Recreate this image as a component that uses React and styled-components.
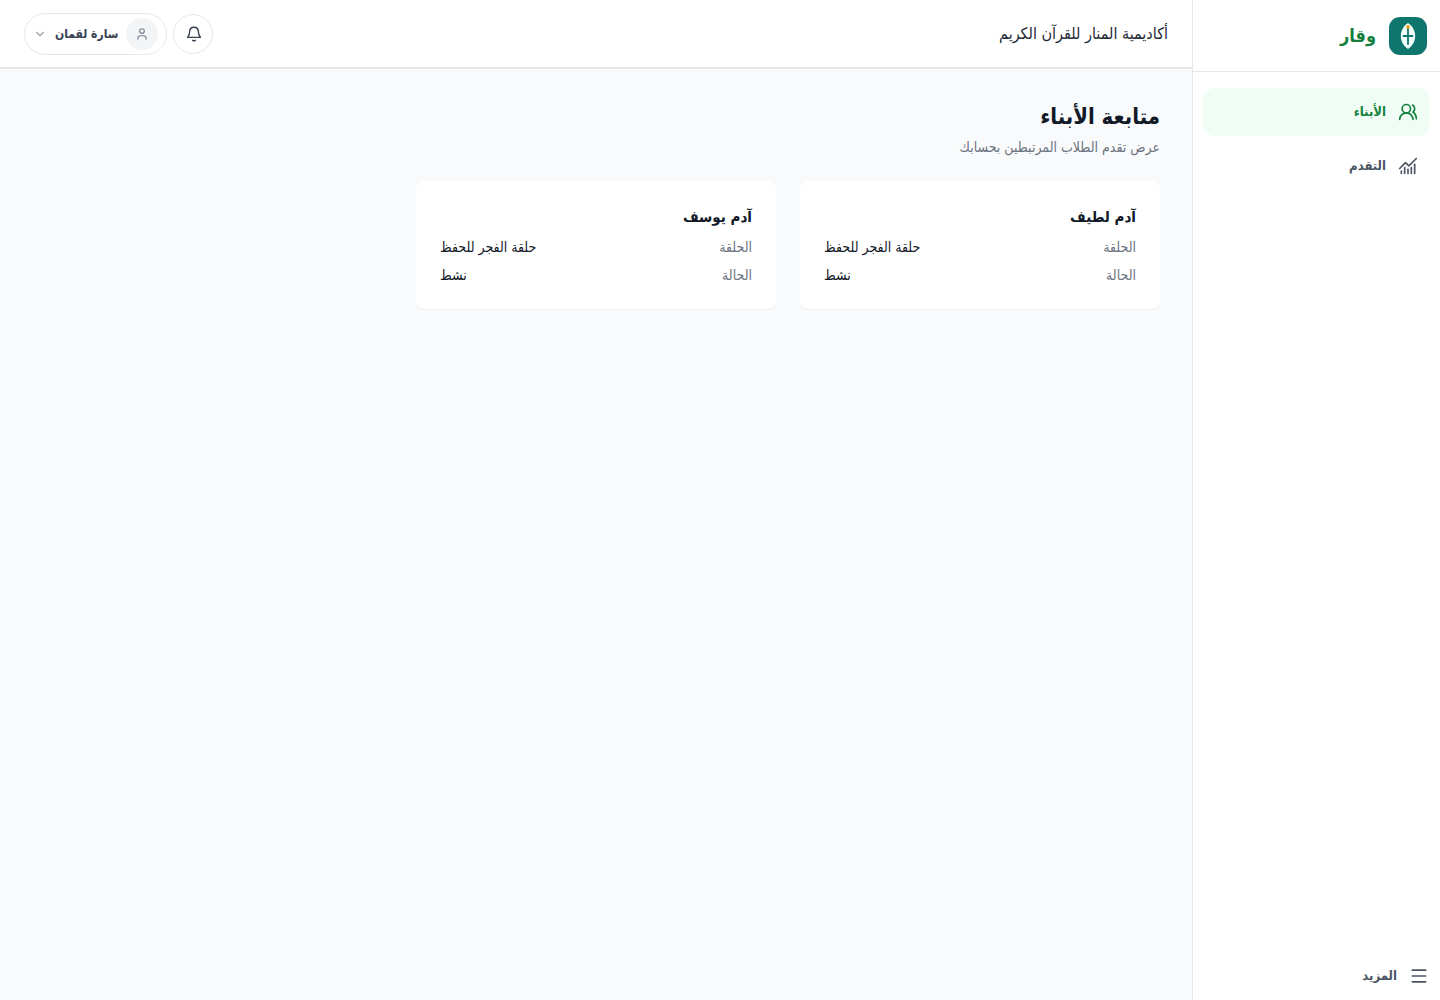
import React from 'react'
import styled, { createGlobalStyle } from 'styled-components'
import {
  ChartNoAxesCombined,
  ChevronDown,
  Menu,
  User,
  UsersRound,
} from 'lucide-react'

const students = [
  { name: 'آدم لطيف', circle: 'حلقة الفجر للحفظ', status: 'نشط' },
  { name: 'آدم يوسف', circle: 'حلقة الفجر للحفظ', status: 'نشط' },
]

const App = () => (
  <>
    <GlobalStyle />
    <Layout dir="rtl" lang="ar">
      <Sidebar>
        <Brand>
          <Logo />
          <BrandName>وقار</BrandName>
        </Brand>
        <Nav>
          <NavLink href="#children" $active>
            <UsersRound size={20} />
            الأبناء
          </NavLink>
          <NavLink href="#progress">
            <ChartNoAxesCombined size={20} />
            التقدم
          </NavLink>
        </Nav>
        <MoreButton type="button">
          <Menu size={20} />
          المزيد
        </MoreButton>
      </Sidebar>
      <Page>
        <Topbar>
          <Academy>أكاديمية المنار للقرآن الكريم</Academy>
          <Actions>
            <BellButton type="button" aria-label="الإشعارات">
              <BellIcon />
            </BellButton>
            <ProfileButton type="button">
              <Avatar>
                <User size={14} />
              </Avatar>
              سارة لقمان
              <ChevronDown size={14} color="#9ca3af" />
            </ProfileButton>
          </Actions>
        </Topbar>
        <Content>
          <Title>متابعة الأبناء</Title>
          <Subtitle>عرض تقدم الطلاب المرتبطين بحسابك</Subtitle>
          <Cards>
            {students.map(student => (
              <StudentCard key={student.name} {...student} />
            ))}
          </Cards>
        </Content>
      </Page>
    </Layout>
  </>
)

export default App

const StudentCard = ({ name, circle, status }) => (
  <Card>
    <CardTitle>{name}</CardTitle>
    <Details>
      <Row>
        <dt>الحلقة</dt>
        <dd>{circle}</dd>
      </Row>
      <Row>
        <dt>الحالة</dt>
        <dd>{status}</dd>
      </Row>
    </Details>
  </Card>
)

const Logo = () => (
  <svg width="40" height="40" viewBox="0 0 40 40" aria-hidden="true">
    <rect x="1" y="1" width="38" height="38" rx="11" fill="#0f766e" />
    <path
      d="M20 7c4.5 3 7.2 8 7.2 13s-2.7 10-7.2 13c-4.5-3-7.2-8-7.2-13s2.700-10 7.2-13z"
      fill="#f0fdfa"
    />
    <path
      d="M20 11v17M15.500 20h9"
      stroke="#0f766e"
      strokeWidth="1.8"
      strokeLinecap="round"
    />
    <circle cx="20" cy="10.800" r="1.800" fill="#f59e0b" />
  </svg>
)

const BellIcon = () => (
  <svg
    width="16"
    height="16"
    viewBox="0 0 16 16"
    fill="none"
    stroke="currentColor"
    strokeWidth="1.4"
    strokeLinecap="round"
    strokeLinejoin="round"
    aria-hidden="true"
  >
    <path d="M8 1.200c-2.700 0-4.300 1.900-4.300 4.300 0 2.900-.8 4.100-2.100 5.900h12.800c-1.300-1.800-2.100-3-2.100-5.900 0-2.400-1.600-4.300-4.300-4.300z" />
    <path d="M6.700 14.300q1.300.9 2.600 0" />
  </svg>
)

const GlobalStyle = createGlobalStyle`
  * {
    box-sizing: border-box;
  }

  body {
    margin: 0;
    background: #f9fafb;
    color: #111827;
    font-family: 'DejaVu Sans Condensed', 'DejaVu Sans', sans-serif;
    font-size: 14px;
    line-height: 20px;
  }

  button {
    font: inherit;
    cursor: pointer;
  }
`

const Layout = styled.div`
  display: flex;
  min-height: 100vh;
`

const Sidebar = styled.aside`
  display: flex;
  flex-direction: column;
  flex: none;
  width: 248px;
  background: #fff;
  border-inline-end: 1px solid #e5e7eb;
`

const Brand = styled.div`
  display: flex;
  align-items: center;
  gap: 12px;
  height: 72px;
  padding: 0 12px;
  border-bottom: 1px solid #e5e7eb;
`

const BrandName = styled.span`
  color: #15803d;
  font-size: 18px;
  font-weight: 700;
  line-height: 28px;
`

const Nav = styled.nav`
  display: flex;
  flex: 1;
  flex-direction: column;
  gap: 6px;
  padding: 16px 10px;
`

const NavLink = styled.a`
  display: flex;
  align-items: center;
  gap: 12px;
  height: 48px;
  padding: 0 12px;
  border-radius: 12px;
  background: ${props => (props.$active ? '#f0fdf4' : 'transparent')};
  color: ${props => (props.$active ? '#15803d' : '#4b5563')};
  font-size: 13px;
  font-weight: 700;
  text-decoration: none;
`

const MoreButton = styled.button`
  display: flex;
  align-items: center;
  gap: 12px;
  height: 48px;
  padding: 0 11px;
  border: 0;
  background: transparent;
  color: #4b5563;
  && {
    font-size: 13px;
    font-weight: 700;
  }
`

const Page = styled.div`
  flex: 1;
  min-width: 0;
`

const Topbar = styled.header`
  display: flex;
  align-items: center;
  justify-content: space-between;
  height: 69px;
  padding: 0 24px;
  background: #fff;
  border-bottom: 2px solid #e5e7eb;
`

const Academy = styled.span`
  color: #1f2937;
  font-size: 16px;
  line-height: 24px;
`

const Actions = styled.div`
  display: flex;
  align-items: center;
  gap: 6px;
`

const BellButton = styled.button`
  display: flex;
  align-items: center;
  justify-content: center;
  width: 40px;
  height: 40px;
  padding: 0 2px 0 0;
  padding-inline: 0 2px;
  border: 1px solid #e5e7eb;
  border-radius: 50%;
  background: #fff;
  color: #374151;
`

const ProfileButton = styled.button`
  display: flex;
  align-items: center;
  gap: 8px;
  height: 42px;
  padding: 0 8px;
  border: 1px solid #e5e7eb;
  border-radius: 21px;
  background: #fff;
  color: #374151;
  && {
    font-size: 12px;
    font-weight: 700;
  }
`

const Avatar = styled.span`
  display: flex;
  align-items: center;
  justify-content: center;
  width: 32px;
  height: 32px;
  border-radius: 50%;
  background: #f3f4f6;
  color: #7b8290;
`

const Content = styled.main`
  padding: 32px;
`

const Title = styled.h1`
  margin: 0;
  font-size: 22px;
  font-weight: 700;
  line-height: 32px;
`

const Subtitle = styled.p`
  margin: 4px 0 0;
  color: #6b7280;
  font-size: 14px;
`

const Cards = styled.div`
  display: grid;
  grid-template-columns: repeat(3, minmax(0, 1fr));
  gap: 24px;
  margin-top: 24px;
`

const Card = styled.article`
  padding: 24px;
  border-radius: 8px;
  background: #fff;
  box-shadow: 0 1px 2px rgba(0, 0, 0, 0.05);
`

const CardTitle = styled.h2`
  margin: 0;
  font-size: 15px;
  font-weight: 700;
  line-height: 24px;
`

const Details = styled.dl`
  display: flex;
  flex-direction: column;
  gap: 8px;
  margin: 8px 0 0;
`

const Row = styled.div`
  display: flex;
  justify-content: space-between;

  dt {
    color: #6b7280;
  }

  dd {
    margin: 0;
  }
`
